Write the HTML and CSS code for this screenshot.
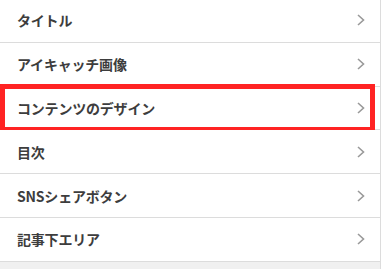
FILE: index.html
```html
<!DOCTYPE html>
<html lang="ja">
<head>
<meta charset="utf-8">
<link rel="stylesheet" href="styles.css">
</head>
<body>
<div class="panel">
  <ul class="menu">
    <li class="item"><span class="label">タイトル</span><svg class="chev" viewBox="0 0 8 12"><path d="M1 1 L6.5 6 L1 11"/></svg></li>
    <li class="item"><span class="label">アイキャッチ画像</span><svg class="chev" viewBox="0 0 8 12"><path d="M1 1 L6.5 6 L1 11"/></svg></li>
    <li class="item active"><span class="label">コンテンツのデザイン</span><svg class="chev" viewBox="0 0 8 12"><path d="M1 1 L6.5 6 L1 11"/></svg><span class="highlight"></span></li>
    <li class="item"><span class="label">目次</span><svg class="chev" viewBox="0 0 8 12"><path d="M1 1 L6.5 6 L1 11"/></svg></li>
    <li class="item"><span class="label">SNSシェアボタン</span><svg class="chev" viewBox="0 0 8 12"><path d="M1 1 L6.5 6 L1 11"/></svg></li>
    <li class="item"><span class="label">記事下エリア</span><svg class="chev" viewBox="0 0 8 12"><path d="M1 1 L6.5 6 L1 11"/></svg></li>
  </ul>
  <div class="footer"></div>
</div>
</body>
</html>
```
FILE: styles.css
```css
html, body {
  margin: 0;
  padding: 0;
  background: #fff;
  overflow: hidden;
}
body {
  font-family: "Noto Sans CJK JP", "Noto Sans", "Liberation Sans", sans-serif;
}
.panel {
  width: 380px;
  border-right: 1px solid #dcdcdc;
  margin-top: -1px;
}
.menu {
  list-style: none;
  margin: 0;
  padding: 0;
}
.item {
  position: relative;
  display: flex;
  align-items: center;
  justify-content: space-between;
  height: 42.8px;
  padding: 0 15px 0 17px;
  border-bottom: 1px solid #dcdcdc;
  background: #fff;
}
.label {
  font-size: 14px;
  font-weight: 700;
  color: #3d3d3d;
  letter-spacing: -0.2px;
}
.chev {
  width: 8px;
  height: 12px;
  fill: none;
  stroke: #999;
  stroke-width: 1.6;
}
.highlight {
  position: absolute;
  left: 0;
  top: -3px;
  width: 375px;
  height: 48px;
  box-sizing: border-box;
  border: 5px solid #ff2323;
  pointer-events: none;
}
.footer {
  height: 20px;
  background: #f0f0f0;
}
```
